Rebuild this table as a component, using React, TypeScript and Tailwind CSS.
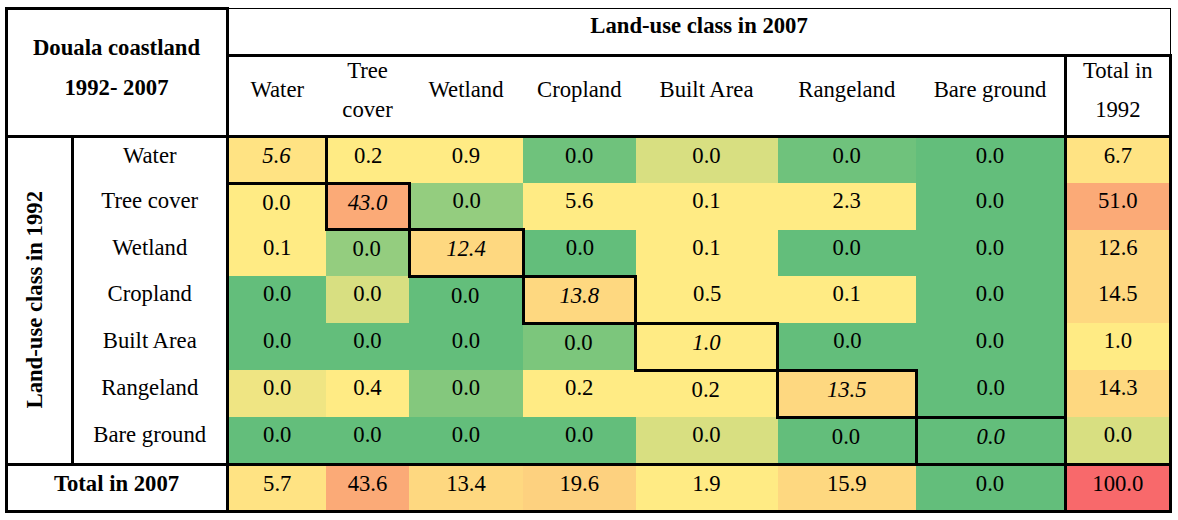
type Cell = { v: string; bg: string; d?: boolean };

// Excel-like colour scale swatches
const G = "bg-[#63be7b]";
const G2 = "bg-[#6fc27c]";
const GL = "bg-[#7cc67c]";
const GL2 = "bg-[#84c87d]";
const GM = "bg-[#94cd7f]";
const GY = "bg-[#d8df81]";
const YK = "bg-[#efe583]";
const Y = "bg-[#ffeb84]";
const Y5 = "bg-[#ffe383]";
const O = "bg-[#fed880]";
const O2 = "bg-[#fdd17f]";
const OR = "bg-[#fbaa77]";
const R = "bg-[#f8696b]";

const c = (v: string, bg: string, d = false): Cell => ({ v, bg, d });

const rows: { label: string; h: string; cells: Cell[]; total: Cell }[] = [
  {
    label: "Water",
    h: "h-[47px]",
    cells: [c("5.6", Y5, true), c("0.2", Y), c("0.9", Y), c("0.0", G2), c("0.0", GY), c("0.0", G2), c("0.0", G)],
    total: c("6.7", Y5),
  },
  {
    label: "Tree cover",
    h: "h-[46.5px]",
    cells: [c("0.0", Y), c("43.0", OR, true), c("0.0", GM), c("5.6", Y), c("0.1", Y), c("2.3", Y), c("0.0", G)],
    total: c("51.0", OR),
  },
  {
    label: "Wetland",
    h: "h-[46.5px]",
    cells: [c("0.1", Y), c("0.0", GM), c("12.4", O, true), c("0.0", G), c("0.1", Y), c("0.0", G), c("0.0", G)],
    total: c("12.6", O),
  },
  {
    label: "Cropland",
    h: "h-[47px]",
    cells: [c("0.0", G), c("0.0", GY), c("0.0", G), c("13.8", O, true), c("0.5", Y), c("0.1", Y), c("0.0", G)],
    total: c("14.5", O),
  },
  {
    label: "Built Area",
    h: "h-[47px]",
    cells: [c("0.0", G), c("0.0", G), c("0.0", G), c("0.0", GL), c("1.0", Y, true), c("0.0", G), c("0.0", G)],
    total: c("1.0", Y),
  },
  {
    label: "Rangeland",
    h: "h-[47px]",
    cells: [c("0.0", YK), c("0.4", Y), c("0.0", GL2), c("0.2", Y), c("0.2", Y), c("13.5", O, true), c("0.0", G)],
    total: c("14.3", O),
  },
  {
    label: "Bare ground",
    h: "h-[47px]",
    cells: [c("0.0", G), c("0.0", G), c("0.0", G), c("0.0", G), c("0.0", GY), c("0.0", G), c("0.0", G, true)],
    total: c("0.0", GY),
  },
];

const totals: Cell[] = [
  c("5.7", Y5),
  c("43.6", OR),
  c("13.4", O),
  c("19.6", O2),
  c("1.9", Y),
  c("15.9", O),
  c("0.0", G),
];

const widths = [
  "w-[66.5px]",
  "w-[154.5px]",
  "w-[99px]",
  "w-[83px]",
  "w-[114px]",
  "w-[112.5px]",
  "w-[142px]",
  "w-[138.5px]",
  "w-[149.5px]",
  "w-[104.5px]",
];

function HeadCell({ children, two }: { children: React.ReactNode; two?: boolean }) {
  return (
    <td className="border-b-[3px] border-black p-0 text-center align-top">
      {two ? (
        <div className="-mt-[6px] leading-[39px]">{children}</div>
      ) : (
        <div className="pt-[13px] leading-[40px]">{children}</div>
      )}
    </td>
  );
}

export default function App() {
  return (
    <div className="bg-white text-black [font-family:'Liberation_Serif','Times_New_Roman',serif] text-[22.7px]">
      <table className="ml-[4.5px] mt-[7px] w-[1164px] table-fixed border-collapse">
        <colgroup>
          {widths.map((w, i) => (
            <col key={i} className={w} />
          ))}
        </colgroup>
        <tbody>
          <tr className="h-[47px]">
            <td
              colSpan={2}
              rowSpan={2}
              className="border-[3px] border-black p-0 pb-[8px] text-center align-middle font-bold leading-[40px]"
            >
              Douala coastland
              <br />
              1992- 2007
            </td>
            <td
              colSpan={8}
              className="border-t border-r border-l-[3px] border-b-[3px] border-black p-0 text-center align-top font-bold leading-[34px]"
            >
              Land-use class in 2007
            </td>
          </tr>
          <tr className="h-[80.5px]">
            <HeadCell>Water</HeadCell>
            <HeadCell two>
              Tree
              <br />
              cover
            </HeadCell>
            <HeadCell>Wetland</HeadCell>
            <HeadCell>Cropland</HeadCell>
            <HeadCell>Built Area</HeadCell>
            <HeadCell>Rangeland</HeadCell>
            <HeadCell>Bare ground</HeadCell>
            <td className="border-x-[3px] border-b-[3px] border-black p-0 text-center align-top">
              <div className="-mt-[6px] leading-[39px]">
                Total in
                <br />
                1992
              </div>
            </td>
          </tr>

          {rows.map((r, ri) => (
            <tr key={r.label} className={r.h}>
              {ri === 0 && (
                <td
                  rowSpan={7}
                  className="border-l-[3px] border-r-[3px] border-b-[3px] border-black p-0 pr-[9px] align-middle"
                >
                  <div className="flex justify-center">
                    <div className="[writing-mode:vertical-rl] rotate-180 whitespace-nowrap font-bold leading-[36px]">
                      Land-use class in 1992
                    </div>
                  </div>
                </td>
              )}
              <td className="border-r-[3px] border-black p-0 text-center align-top leading-[36px]">
                {r.label}
              </td>
              {r.cells.map((cell, ci) => (
                <td
                  key={ci}
                  className={`${cell.bg} p-0 text-center align-top leading-[36px] ${
                    cell.d ? "border-[3px] border-black italic" : ""
                  }`}
                >
                  {cell.v}
                </td>
              ))}
              <td
                className={`${r.total.bg} border-x-[3px] border-black p-0 text-center align-top leading-[36px]`}
              >
                {r.total.v}
              </td>
            </tr>
          ))}

          <tr className="h-[47.5px]">
            <td
              colSpan={2}
              className="border-[3px] border-black p-0 text-center align-top font-bold leading-[36px]"
            >
              Total in 2007
            </td>
            {totals.map((cell, ci) => (
              <td
                key={ci}
                className={`${cell.bg} border-y-[3px] border-black p-0 text-center align-top leading-[36px]`}
              >
                {cell.v}
              </td>
            ))}
            <td className={`${R} border-[3px] border-black p-0 text-center align-top leading-[36px]`}>
              100.0
            </td>
          </tr>
        </tbody>
      </table>
    </div>
  );
}
